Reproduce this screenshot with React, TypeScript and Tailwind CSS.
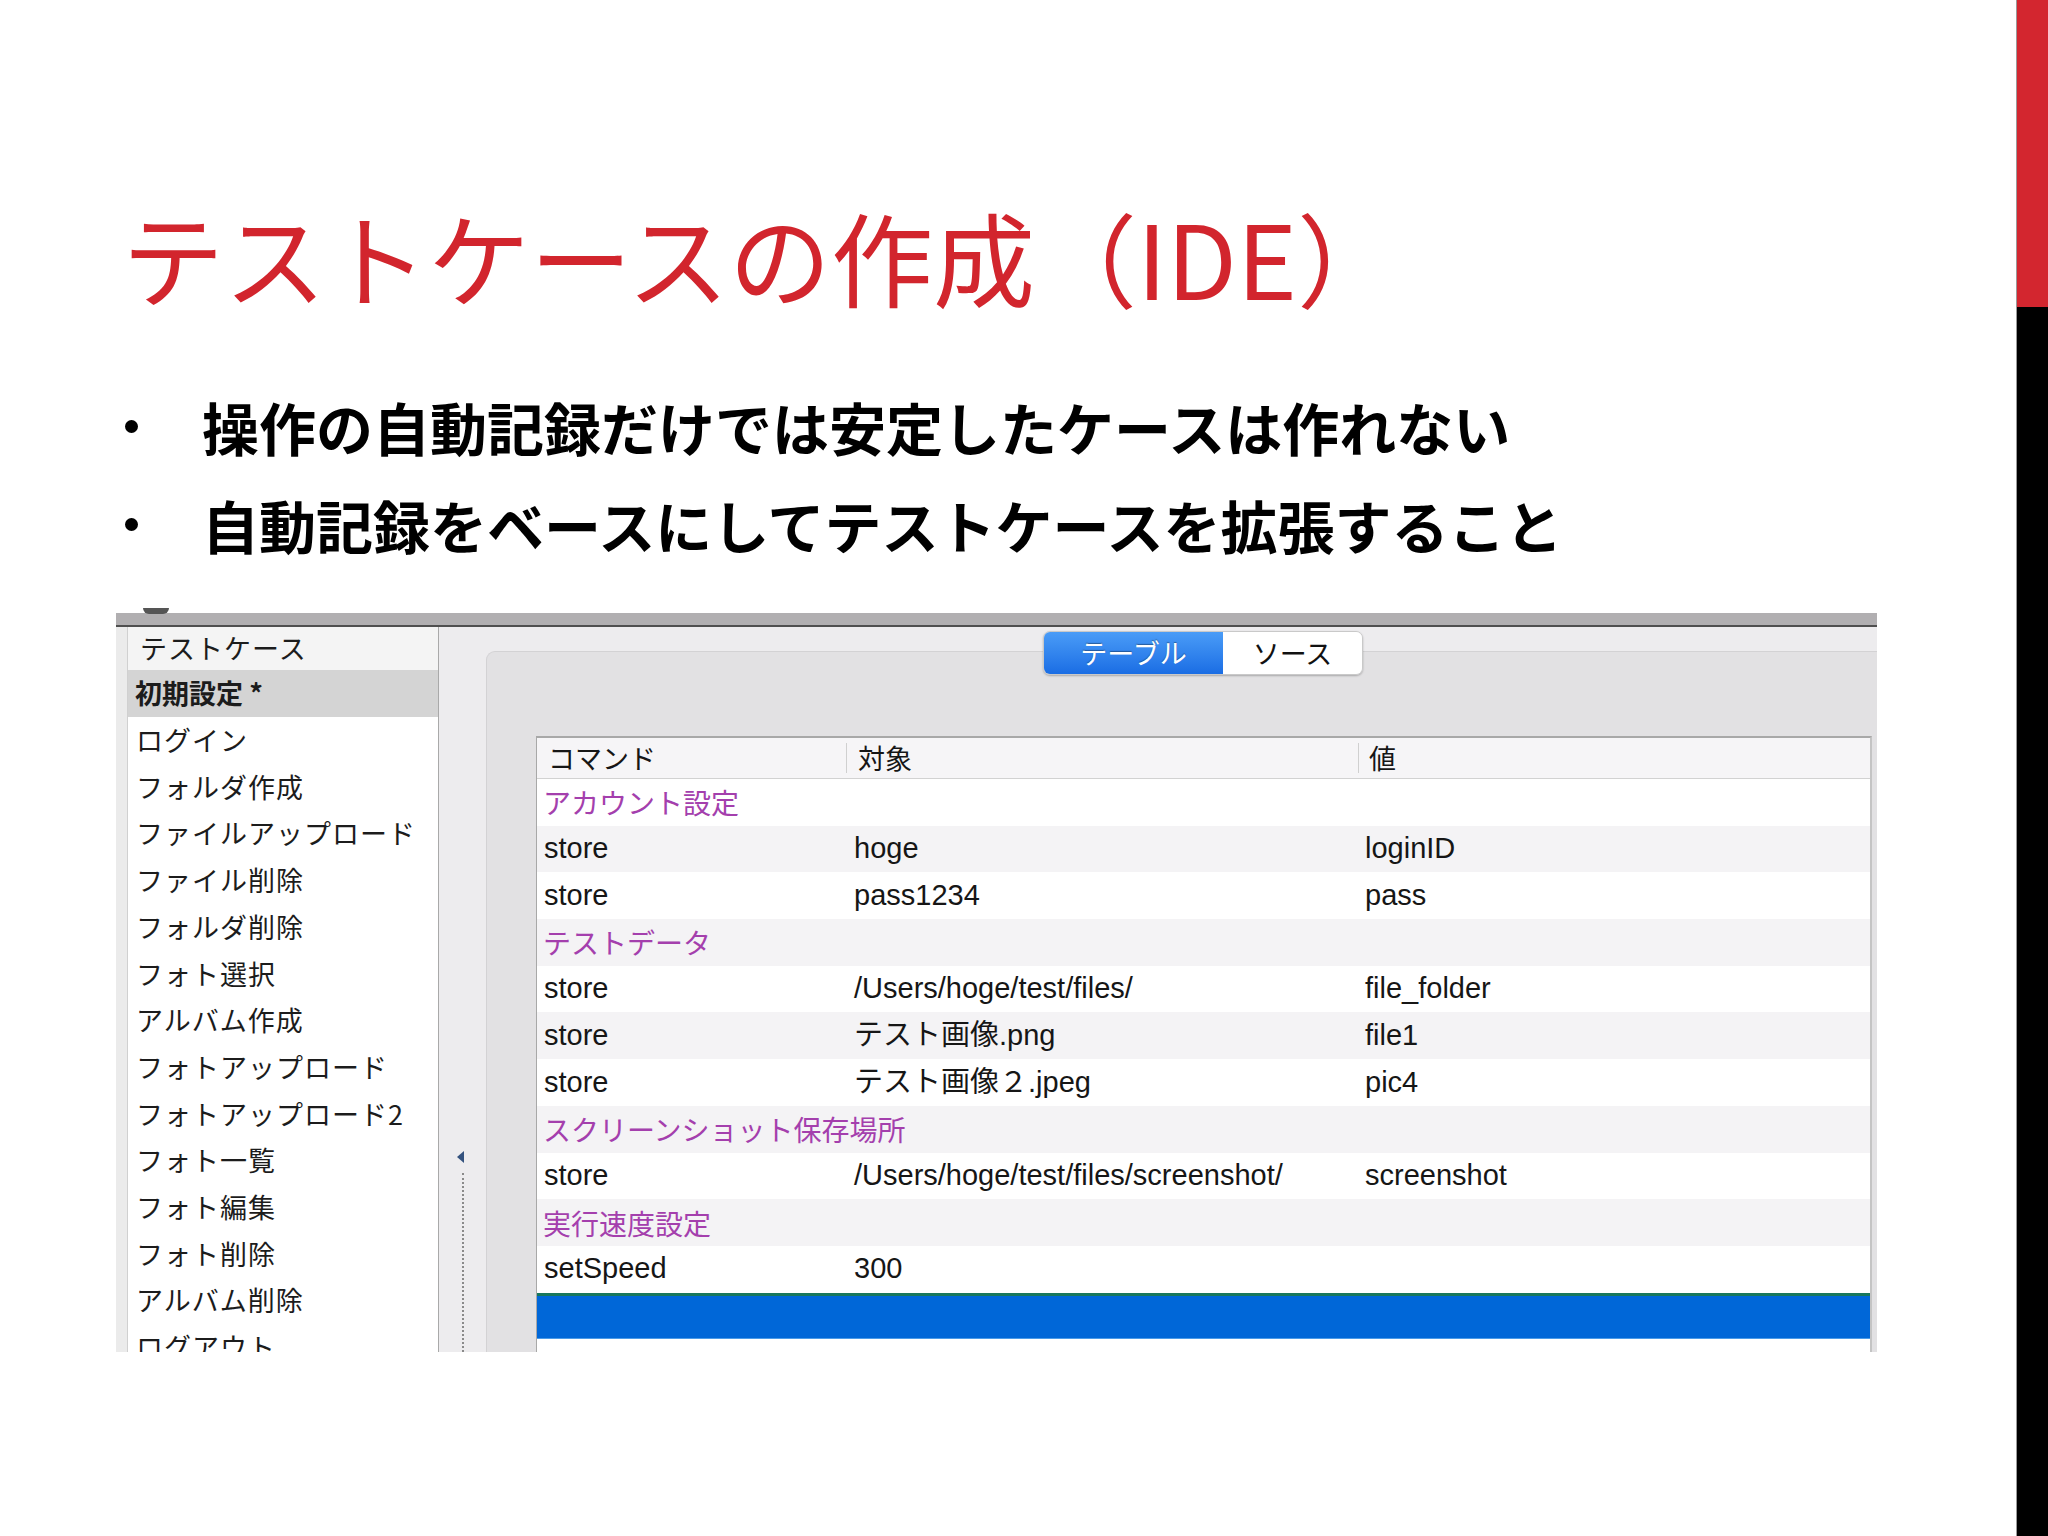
import React from 'react';

const listItems = [
  'ログイン',
  'フォルダ作成',
  'ファイルアップロード',
  'ファイル削除',
  'フォルダ削除',
  'フォト選択',
  'アルバム作成',
  'フォトアップロード',
  'フォトアップロード2',
  'フォト一覧',
  'フォト編集',
  'フォト削除',
  'アルバム削除',
  'ログアウト',
];

type Row = { comment?: string; cmd?: string; target?: string; value?: string };

const rows: Row[] = [
  { comment: 'アカウント設定' },
  { cmd: 'store', target: 'hoge', value: 'loginID' },
  { cmd: 'store', target: 'pass1234', value: 'pass' },
  { comment: 'テストデータ' },
  { cmd: 'store', target: '/Users/hoge/test/files/', value: 'file_folder' },
  { cmd: 'store', target: 'テスト画像.png', value: 'file1' },
  { cmd: 'store', target: 'テスト画像２.jpeg', value: 'pic4' },
  { comment: 'スクリーンショット保存場所' },
  { cmd: 'store', target: '/Users/hoge/test/files/screenshot/', value: 'screenshot' },
  { comment: '実行速度設定' },
  { cmd: 'setSpeed', target: '300', value: '' },
];

export default function App() {
  return (
    <div className="w-[2048px] h-[1536px] flex bg-white overflow-hidden font-['Noto_Sans_CJK_JP',sans-serif]">
      {/* main slide content */}
      <div className="flex-1 flex flex-col pl-[116px] pt-[205px]">
        <h1 className="ml-[6px] text-[102px] leading-[102px] font-normal text-[#d2252d] whitespace-nowrap">
          テストケースの作成（IDE）
        </h1>

        <div className="mt-[70px] flex flex-col text-black">
          {['操作の自動記録だけでは安定したケースは作れない', '自動記録をベースにしてテストケースを拡張すること'].map((t) => (
            <div key={t} className="flex items-center h-[98px]">
              <div className="ml-[9px] w-[13px] h-[13px] rounded-full bg-black" />
              <div className="ml-[64px] text-[57px] leading-[98px] font-bold whitespace-nowrap">{t}</div>
            </div>
          ))}
        </div>

        {/* screenshot of the IDE */}
        <div className="relative mt-[40px] w-[1761px] h-[739px] flex flex-col">
          <div className="absolute left-[27px] -top-[5px] w-[26px] h-[6px] rounded-b-full bg-[#555]" />
          <div className="h-[14px] bg-[#b1afb1] border-b-2 border-[#4f4f4f]" />
          <div className="flex-1 flex min-h-0 overflow-hidden">
            {/* left strip */}
            <div className="w-[12px] bg-[#ebebeb] border-r border-[#d0d0d0]" />
            {/* test case list */}
            <div className="w-[311px] bg-white border-r border-[#a9a9a9] flex flex-col text-[27px] text-[#1c1c1c] tracking-[1px]">
              <div className="h-[43px] bg-[#f4f4f4] flex items-center pl-[12px] shrink-0">テストケース</div>
              <div className="h-[47px] bg-[#d4d4d4] flex items-center pl-[7px] font-bold shrink-0 tracking-[0px]">初期設定 *</div>
              {listItems.map((it) => (
                <div key={it} className="h-[46.7px] flex items-center pl-[8px] shrink-0 whitespace-nowrap">
                  {it}
                </div>
              ))}
            </div>
            {/* right part */}
            <div className="relative flex-1 flex flex-col bg-[#edecee]">
              <div className="h-[24px] shrink-0" />
              <div className="flex-1 flex min-h-0">
                {/* splitter */}
                <div className="w-[47px] flex flex-col items-center pt-[500px]">
                  <div className="ml-[-4px] w-0 h-0 border-y-[6px] border-y-transparent border-r-[7px] border-r-[#34527e]" />
                  <div className="mt-[10px] flex-1 border-l-2 border-dotted border-[#8a8a8a]" />
                </div>
                {/* group box */}
                <div className="flex-1 bg-[#e2e1e3] rounded-tl-[9px] border-t border-l border-[#d3d2d4] pl-[49px] pt-[84px] pr-[5px] flex flex-col min-h-0">
                  <div className="flex-1 bg-white border-t-2 border-l border-r-2 border-[#a8a8a8] border-r-[#c4c4c4] flex flex-col font-['Liberation_Sans','Noto_Sans_CJK_JP',sans-serif] text-[29px] text-[#161616]">
                    {/* header */}
                    <div className="h-[41px] shrink-0 flex bg-[#f6f5f7] border-b border-[#d2d2d2] font-['Noto_Sans_CJK_JP',sans-serif] text-[27px]">
                      <div className="w-[310px] flex items-center pl-[11px] border-r border-[#d0d0d0] my-[5px]">コマンド</div>
                      <div className="w-[512px] flex items-center pl-[11px] border-r border-[#d0d0d0] my-[5px]">対象</div>
                      <div className="flex-1 flex items-center pl-[10px]">値</div>
                    </div>
                    {rows.map((r, i) => (
                      <div
                        key={i}
                        className={`h-[46.7px] shrink-0 flex items-center ${i % 2 === 0 ? 'bg-white' : 'bg-[#f4f3f5]'}`}
                      >
                        {r.comment ? (
                          <div className="pl-[6px] text-[#a43fad] font-['Noto_Sans_CJK_JP',sans-serif] text-[28px]">{r.comment}</div>
                        ) : (
                          <>
                            <div className="w-[310px] pl-[7px] whitespace-nowrap">{r.cmd}</div>
                            <div className="w-[512px] pl-[7px] whitespace-nowrap">{r.target}</div>
                            <div className="flex-1 pl-[6px] whitespace-nowrap">{r.value}</div>
                          </>
                        )}
                      </div>
                    ))}
                    <div className="h-[46.5px] shrink-0 bg-[#0067d8] border-t-[3px] border-[#17775c] border-b border-b-[#4a9be8]" />
                    <div className="flex-1 bg-white" />
                  </div>
                </div>
              </div>
              {/* segmented control */}
              <div className="absolute left-[604px] top-[4px] w-[320px] h-[44px] flex rounded-[7px] overflow-hidden shadow-[0_1px_2px_rgba(0,0,0,0.25)] border border-[#c9c9c9] text-[27px]">
                <div className="w-[179px] flex items-center justify-center bg-gradient-to-b from-[#4a9cf7] to-[#1a6de4] text-white [text-shadow:0_-1px_1px_rgba(0,0,0,0.35)]">
                  テーブル
                </div>
                <div className="flex-1 flex items-center justify-center bg-white text-[#111]">ソース</div>
              </div>
            </div>
          </div>
        </div>
      </div>

      {/* right accent bar */}
      <div className="w-[32px] flex flex-col border-l border-[#9a9a9a]">
        <div className="h-[307px] bg-[#d3262f]" />
        <div className="flex-1 bg-black" />
      </div>
    </div>
  );
}
